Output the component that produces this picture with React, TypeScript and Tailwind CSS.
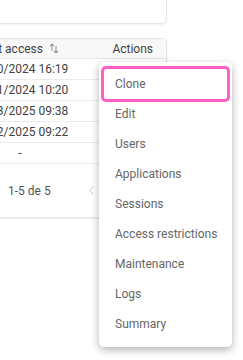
import { ChevronLeft } from "lucide-react";

const rows = ["10/10/2024 16:19", "11/11/2024 10:20", "03/03/2025 09:38", "02/02/2025 09:22", "-"];

const menuItems = [
  "Clone",
  "Edit",
  "Users",
  "Applications",
  "Sessions",
  "Access restrictions",
  "Maintenance",
  "Logs",
  "Summary",
];

const SortIcon = () => (
  <svg width="10" height="11" viewBox="0 0 10 11" fill="none" stroke="#9e9e9e" strokeWidth="1.2">
    <path d="M3 8V1M1 3l2-2 2 2" />
    <path d="M7 3v7M5 8l2 2 2-2" />
  </svg>
);

const App = () => {
  return (
    <div className="relative w-[243px] h-[360px] overflow-hidden bg-white font-['Roboto',sans-serif] text-[12px] text-[#424242]">
      {/* card above, cut off */}
      <div className="-mt-[10px] -ml-[20px] w-[187px] h-[34px] rounded-[5px] border border-[#e6e6e6] bg-white shadow-[0_1px_2px_rgba(0,0,0,0.06)]" />

      {/* table card */}
      <div className="mt-[14px] -ml-[41px] w-[208px] rounded-[5px] border border-[#e6e6e6] bg-white shadow-[0_1px_3px_rgba(0,0,0,0.08)] overflow-hidden">
        <div className="flex h-[20px] items-center border-b border-[#e6e6e6] bg-[#f8f8f8]">
          <div className="flex w-[120px] items-center gap-[6px] pl-[19px]">
            <span className="whitespace-nowrap">Last access</span>
            <SortIcon />
          </div>
          <div className="flex-1 pr-[13px] text-right">Actions</div>
        </div>
        {rows.map((r, i) => (
          <div key={i} className="flex h-[21px] items-center border-b border-[#ececec]">
            <div className="w-[120px] text-center">{r}</div>
            <div className="flex-1" />
          </div>
        ))}
        <div className="flex h-[53px] items-center pl-[48px] text-[#555]">
          <span>1-5 de 5</span>
          <ChevronLeft size={15} strokeWidth={1.4} className="ml-[33px] text-[#c4c4c4]" />
        </div>
      </div>

      {/* dropdown menu */}
      <div className="absolute left-[99px] top-[62px] w-[133px] rounded-[5px] bg-white pt-[7px] pb-[8px] shadow-[0_3px_9px_rgba(0,0,0,0.3)]">
        {menuItems.map((item, i) => (
          <div
            key={item}
            className={
              i === 0
                ? "mx-[5px] flex h-[30px] items-center rounded-[2px] pl-[11px] text-[#666] outline outline-[3px] outline-[#ff5ec6]"
                : "mx-[5px] flex h-[30px] items-center pl-[11px] text-[#666]"
            }
          >
            {item}
          </div>
        ))}
      </div>
    </div>
  );
};

export default App;
